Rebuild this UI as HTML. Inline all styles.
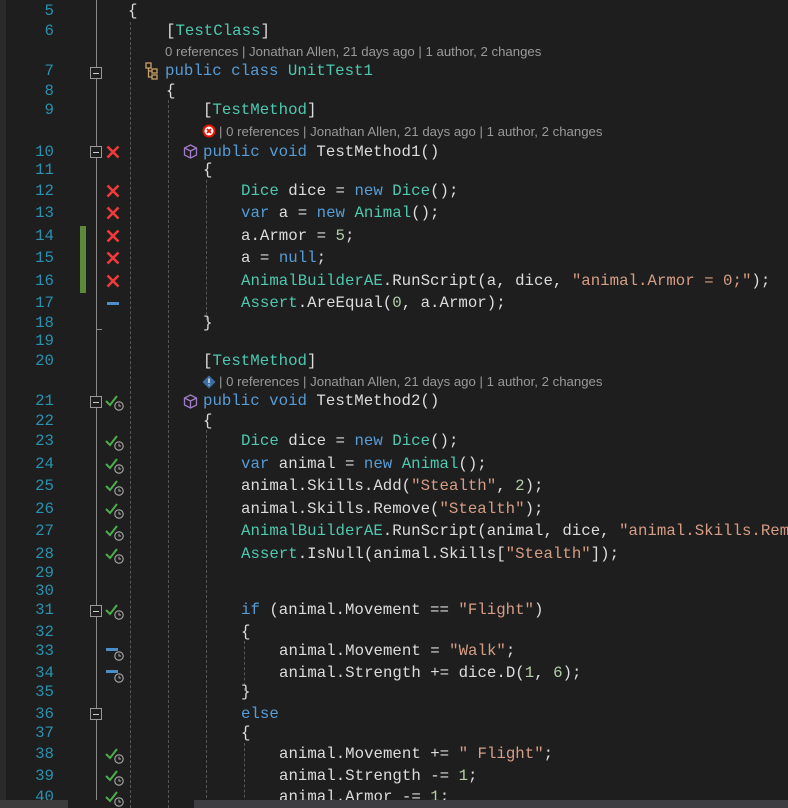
<!DOCTYPE html><html style="overflow:hidden"><head><style>
html,body{overflow:hidden}
body{margin:0;width:788px;height:808px;background:#1e1e1e;position:relative;font-family:"Liberation Mono",monospace;}
.l{position:absolute;height:20px;line-height:20px;font-size:15.75px;color:#dcdcdc;white-space:pre;}
.ln{position:absolute;left:0;width:54px;text-align:right;height:20px;line-height:20px;font-size:15.75px;color:#2b91af;font-family:"Liberation Mono",monospace;}
.k{color:#569cd6}.t{color:#4ec9b0}.s{color:#d69d85}.n{color:#b5cea8}
.lens{position:absolute;height:18px;line-height:18px;font-family:"Liberation Sans",sans-serif;font-size:13.2px;color:#999;white-space:pre;}
.fold{position:absolute;left:90px;width:10px;height:10px;border:1px solid #999;background:#1e1e1e;}
.fold:after{content:"";position:absolute;left:2px;top:4.5px;width:6px;height:1px;background:#ccc;}
.x{position:absolute;left:106px;width:14px;height:14px;}
.ck{position:absolute;left:104px;width:22px;height:18px;}
.dash{position:absolute;left:107px;width:12px;height:3px;background:#4f8dc9;}
.g{position:absolute;width:0;border-left:1px dashed #555;}
</style></head><body>
<svg width="0" height="0" style="position:absolute"><defs><g id="ok"><path d="M2 8L6 12L13 3" fill="none" stroke="#4cae4c" stroke-width="2"/><circle cx="15" cy="13" r="4.2" fill="#1e1e1e" stroke="#aaa" stroke-width="1.1"/><path d="M15 10.8V13H17" fill="none" stroke="#aaa" stroke-width="1"/></g><g id="nr"><rect x="2" y="5" width="12" height="3" fill="#4f8dc9"/><circle cx="15" cy="13" r="4.2" fill="#1e1e1e" stroke="#aaa" stroke-width="1.1"/><path d="M15 10.8V13H17" fill="none" stroke="#aaa" stroke-width="1"/></g><g id="xx"><path d="M1.5 1.5L12.5 12.5M12.5 1.5L1.5 12.5" stroke="#f03a3a" stroke-width="2.6"/></g></defs></svg>
<div style="position:absolute;left:0;top:0;width:6px;height:808px;background:#2a2a2a"></div>
<div style="position:absolute;left:96px;top:0;width:1px;height:800px;background:#8a8a8a"></div>
<div style="position:absolute;left:80px;top:226px;width:6px;height:67px;background:#5a8a3a"></div>
<div class="g" style="left:130px;top:22px;height:786px"></div>
<div class="g" style="left:168px;top:100px;height:708px"></div>
<div class="g" style="left:206px;top:180px;height:140px"></div>
<div class="g" style="left:206px;top:430px;height:378px"></div>
<div class="g" style="left:244px;top:641px;height:50px"></div>
<div class="g" style="left:244px;top:743px;height:65px"></div>

<div class="ln" style="top:1px">5</div><div class="l" style="left:128px;top:1px">{</div>
<div class="ln" style="top:21px">6</div><div class="l" style="left:166px;top:21px">[<span class="t">TestClass</span>]</div>
<div class="lens" style="left:165px;top:43px">0 references | Jonathan Allen, 21 days ago | 1 author, 2 changes</div>
<div class="ln" style="top:61px">7</div><div class="fold" style="top:67px"></div>
<svg style="position:absolute;left:145px;top:62px" width="14" height="18"><g fill="none" stroke="#c8a266" stroke-width="1.3"><rect x="1" y="1" width="5" height="5"/><rect x="7" y="7" width="5" height="4"/><rect x="7" y="13" width="5" height="4"/><path d="M3.5 6V15H7M3.5 9H7"/></g></svg>
<div class="l" style="left:165px;top:61px"><span class="k">public</span> <span class="k">class</span> <span class="t">UnitTest1</span></div>
<div class="ln" style="top:81px">8</div><div class="l" style="left:166px;top:81px">{</div>
<div class="ln" style="top:100px">9</div><div class="l" style="left:203px;top:100px">[<span class="t">TestMethod</span>]</div>
<svg style="position:absolute;left:202px;top:124px" width="14" height="14"><circle cx="7" cy="7" r="6.5" fill="#e51400"/><circle cx="7" cy="7" r="4.5" fill="#fff"/><path d="M5 5L9 9M9 5L5 9" stroke="#e51400" stroke-width="1.8"/></svg>
<div class="lens" style="left:219px;top:123px">| 0 references | Jonathan Allen, 21 days ago | 1 author, 2 changes</div>
<div class="ln" style="top:142px">10</div><div class="fold" style="top:146px"></div><svg class="x" style="top:145px"><use href="#xx"/></svg>
<svg style="position:absolute;left:183px;top:144px" width="15" height="15"><g fill="none" stroke="#a07cc8" stroke-width="1.3"><path d="M7.5 1L13.5 4V11L7.5 14L1.5 11V4Z"/><path d="M1.5 4L7.5 7L13.5 4M7.5 7V14"/></g></svg>
<div class="l" style="left:203px;top:142px"><span class="k">public</span> <span class="k">void</span> TestMethod1()</div>
<div class="ln" style="top:160px">11</div><div class="l" style="left:203px;top:160px">{</div>
<div class="ln" style="top:181px">12</div><svg class="x" style="top:184px"><use href="#xx"/></svg><div class="l" style="left:241px;top:181px"><span class="t">Dice</span> dice = <span class="k">new</span> <span class="t">Dice</span>();</div>
<div class="ln" style="top:203px">13</div><svg class="x" style="top:206px"><use href="#xx"/></svg><div class="l" style="left:241px;top:203px"><span class="k">var</span> a = <span class="k">new</span> <span class="t">Animal</span>();</div>
<div class="ln" style="top:226px">14</div><svg class="x" style="top:229px"><use href="#xx"/></svg><div class="l" style="left:241px;top:226px">a.Armor = <span class="n">5</span>;</div>
<div class="ln" style="top:248px">15</div><svg class="x" style="top:251px"><use href="#xx"/></svg><div class="l" style="left:241px;top:248px">a = <span class="k">null</span>;</div>
<div class="ln" style="top:271px">16</div><svg class="x" style="top:274px"><use href="#xx"/></svg><div class="l" style="left:241px;top:271px"><span class="t">AnimalBuilderAE</span>.RunScript(a, dice, <span class="s">"animal.Armor = 0;"</span>);</div>
<div class="ln" style="top:293px">17</div><div class="dash" style="top:302px"></div><div class="l" style="left:241px;top:293px"><span class="t">Assert</span>.AreEqual(<span class="n">0</span>, a.Armor);</div>
<div class="ln" style="top:313px">18</div><div class="l" style="left:203px;top:313px">}</div>
<div style="position:absolute;left:96px;top:329px;width:6px;height:1px;background:#8a8a8a"></div>
<div class="ln" style="top:331px">19</div>
<div class="ln" style="top:351px">20</div><div class="l" style="left:203px;top:351px">[<span class="t">TestMethod</span>]</div>
<svg style="position:absolute;left:202px;top:375px" width="14" height="14"><path d="M7 0.5L13.5 7L7 13.5L0.5 7Z" fill="#3a6ea5"/><path d="M7 3.5V8M7 9.5V10.5" stroke="#ddd" stroke-width="1.6"/></svg>
<div class="lens" style="left:219px;top:373px">| 0 references | Jonathan Allen, 21 days ago | 1 author, 2 changes</div>

<div class="ln" style="top:391px">21</div><div class="fold" style="top:396px"></div><svg class="ck" style="top:393px"><use href="#ok"/></svg>
<svg style="position:absolute;left:183px;top:394px" width="15" height="15"><g fill="none" stroke="#a07cc8" stroke-width="1.3"><path d="M7.5 1L13.5 4V11L7.5 14L1.5 11V4Z"/><path d="M1.5 4L7.5 7L13.5 4M7.5 7V14"/></g></svg>
<div class="l" style="left:203px;top:391px"><span class="k">public</span> <span class="k">void</span> TestMethod2()</div>
<div class="ln" style="top:411px">22</div><div class="l" style="left:203px;top:411px">{</div>
<div class="ln" style="top:431px">23</div><svg class="ck" style="top:433px"><use href="#ok"/></svg><div class="l" style="left:241px;top:431px"><span class="t">Dice</span> dice = <span class="k">new</span> <span class="t">Dice</span>();</div>
<div class="ln" style="top:454px">24</div><svg class="ck" style="top:456px"><use href="#ok"/></svg><div class="l" style="left:241px;top:454px"><span class="k">var</span> animal = <span class="k">new</span> <span class="t">Animal</span>();</div>
<div class="ln" style="top:476px">25</div><svg class="ck" style="top:478px"><use href="#ok"/></svg><div class="l" style="left:241px;top:476px">animal.Skills.Add(<span class="s">"Stealth"</span>, <span class="n">2</span>);</div>
<div class="ln" style="top:499px">26</div><svg class="ck" style="top:501px"><use href="#ok"/></svg><div class="l" style="left:241px;top:499px">animal.Skills.Remove(<span class="s">"Stealth"</span>);</div>
<div class="ln" style="top:521px">27</div><svg class="ck" style="top:523px"><use href="#ok"/></svg><div class="l" style="left:241px;top:521px"><span class="t">AnimalBuilderAE</span>.RunScript(animal, dice, <span class="s">"animal.Skills.Rem</span></div>
<div class="ln" style="top:544px">28</div><svg class="ck" style="top:546px"><use href="#ok"/></svg><div class="l" style="left:241px;top:544px"><span class="t">Assert</span>.IsNull(animal.Skills[<span class="s">"Stealth"</span>]);</div>
<div class="ln" style="top:563px">29</div>
<div class="ln" style="top:581px">30</div>
<div class="ln" style="top:600px">31</div><div class="fold" style="top:605px"></div><svg class="ck" style="top:602px"><use href="#ok"/></svg><div class="l" style="left:241px;top:600px"><span class="k">if</span> (animal.Movement == <span class="s">"Flight"</span>)</div>
<div class="ln" style="top:622px">32</div><div class="l" style="left:241px;top:622px">{</div>
<div class="ln" style="top:641px">33</div><svg class="ck" style="top:643px"><use href="#nr"/></svg><div class="l" style="left:279px;top:641px">animal.Movement = <span class="s">"Walk"</span>;</div>
<div class="ln" style="top:663px">34</div><svg class="ck" style="top:665px"><use href="#nr"/></svg><div class="l" style="left:279px;top:663px">animal.Strength += dice.D(<span class="n">1</span>, <span class="n">6</span>);</div>
<div class="ln" style="top:682px">35</div><div class="l" style="left:241px;top:682px">}</div>
<div class="ln" style="top:704px">36</div><div class="fold" style="top:708px"></div><div class="l" style="left:241px;top:704px"><span class="k">else</span></div>
<div class="ln" style="top:723px">37</div><div class="l" style="left:241px;top:723px">{</div>
<div class="ln" style="top:744px">38</div><svg class="ck" style="top:746px"><use href="#ok"/></svg><div class="l" style="left:279px;top:744px">animal.Movement += <span class="s">" Flight"</span>;</div>
<div class="ln" style="top:766px">39</div><svg class="ck" style="top:768px"><use href="#ok"/></svg><div class="l" style="left:279px;top:766px">animal.Strength -= <span class="n">1</span>;</div>
<div class="ln" style="top:787px">40</div><svg class="ck" style="top:789px"><use href="#ok"/></svg><div class="l" style="left:279px;top:787px">animal.Armor -= <span class="n">1</span>;</div>
<div style="position:absolute;left:0;top:800px;width:68px;height:8px;background:#3c3c3c"></div>
<div style="position:absolute;left:194px;top:800px;width:594px;height:8px;background:#3e3e42"></div>
</body></html>
